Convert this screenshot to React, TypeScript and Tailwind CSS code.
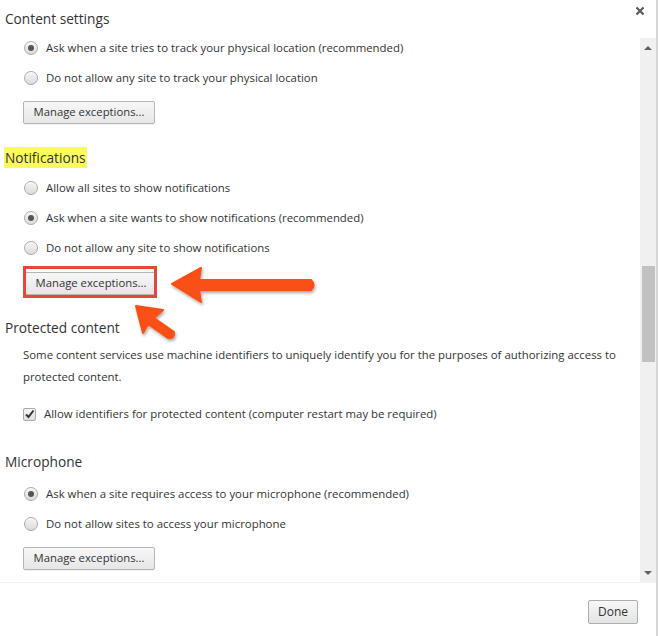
import React from "react";

const font = { fontFamily: '"Open Sans", "Noto Sans", Arial, sans-serif' };

function Radio({ checked }: { checked?: boolean }) {
  return (
    <span className="relative inline-flex h-[14px] w-[14px] shrink-0 items-center justify-center rounded-full border border-[#a9a9a9] bg-gradient-to-b from-[#f4f4f4] to-[#dcdcdc] shadow-[inset_0_1px_0_#fff]">
      {checked && <span className="h-[6px] w-[6px] rounded-full bg-[#555]" />}
    </span>
  );
}

function RadioRow({ checked, children, mt }: { checked?: boolean; children: React.ReactNode; mt: string }) {
  return (
    <div className={`flex h-[20px] items-center gap-[8px] pl-[24px] ${mt}`}>
      <Radio checked={checked} />
      <span className="whitespace-nowrap text-[11.4px] text-[#333]">{children}</span>
    </div>
  );
}

function ManageBtn({ mt }: { mt: string }) {
  return (
    <div className={`pl-[23px] ${mt}`}>
      <button className="flex h-[23px] w-[132px] items-center justify-center rounded-[2px] border border-[#b5b5b5] bg-gradient-to-b from-[#f7f7f7] to-[#e6e6e6] text-[11.3px] text-[#333] shadow-[0_1px_0_rgba(0,0,0,0.06)]">
        Manage exceptions...
      </button>
    </div>
  );
}

function Heading({ children, mt }: { children: React.ReactNode; mt: string }) {
  return <div className={`h-[21px] pl-[5px] text-[13.7px] leading-[21px] text-[#333] ${mt}`}>{children}</div>;
}

export default function App() {
  return (
    <div className="relative h-[636px] w-[658px] overflow-hidden bg-white" style={font}>
      <div className="flex h-full flex-col border-r-2 border-[#d6d6d6]">
        {/* header */}
        <div className="flex h-[38px] items-start justify-between">
          <div className="pl-[5px] pt-[8px] text-[13.7px] leading-[22px] text-[#333]">Content settings</div>
          <div className="pr-[10px] pt-[4px] text-[#666]">
            <svg width="12" height="12" viewBox="0 0 12 12" className="mt-[1px]">
              <path d="M2.5 2.5 L9.5 9.5 M9.5 2.5 L2.5 9.5" stroke="#5a5a5a" strokeWidth="2.2" />
            </svg>
          </div>
        </div>
        {/* body */}
        <div className="flex h-[544px]">
          <div className="flex-1 overflow-hidden">
            <RadioRow checked mt="mt-0">Ask when a site tries to track your physical location (recommended)</RadioRow>
            <RadioRow mt="mt-[10px]">Do not allow any site to track your physical location</RadioRow>
            <ManageBtn mt="mt-[13px]" />
            <div className="mt-[21px] h-[21px] pl-[4px]">
              <span className="inline-block h-[21px] bg-[#fbfb5c] px-[1px] text-[13.7px] leading-[21px] text-[#333]">Notifications</span>
            </div>
            <RadioRow mt="mt-[12px]">Allow all sites to show notifications</RadioRow>
            <RadioRow checked mt="mt-[10px]">Ask when a site wants to show notifications (recommended)</RadioRow>
            <RadioRow mt="mt-[10px]">Do not allow any site to show notifications</RadioRow>
            <div className="relative mt-[14px]">
              <div className="pl-[2px]">
                <ManageBtn mt="mt-0" />
              </div>
              <span className="absolute left-[23px] top-[-6px] h-[32px] w-[134px] border-[3px] border-[#e6463c]" />
            </div>
            <Heading mt="mt-[22px]">Protected content</Heading>
            <div className="mt-[6px] whitespace-nowrap pl-[23px] text-[11.4px] leading-[22px] text-[#333]">
              Some content services use machine identifiers to uniquely identify you for the purposes of authorizing access to
              <br />
              protected content.
            </div>
            <div className="mt-[16px] flex h-[20px] items-center gap-[8px] pl-[23px]">
              <span className="flex h-[13px] w-[13px] shrink-0 items-center justify-center rounded-[2px] border border-[#a9a9a9] bg-gradient-to-b from-[#f6f6f6] to-[#dedede]">
                <svg width="11" height="11" viewBox="0 0 11 11">
                  <path d="M2 5.5 L4.5 8 L9.5 1.5" fill="none" stroke="#333" strokeWidth="2" />
                </svg>
              </span>
              <span className="whitespace-nowrap text-[11.4px] text-[#333]">Allow identifiers for protected content (computer restart may be required)</span>
            </div>
            <Heading mt="mt-[27px]">Microphone</Heading>
            <RadioRow checked mt="mt-[12px]">Ask when a site requires access to your microphone (recommended)</RadioRow>
            <RadioRow mt="mt-[10px]">Do not allow sites to access your microphone</RadioRow>
            <ManageBtn mt="mt-[13px]" />
          </div>
          {/* scrollbar */}
          <div className="flex w-[16px] flex-col items-center bg-[#f0f0f0]">
            <div className="flex h-[18px] items-center justify-center">
              <svg width="8" height="5" viewBox="0 0 8 5"><path d="M0 5 L4 1 L8 5 Z" fill="#606060" /></svg>
            </div>
            <div className="h-[210px]" />
            <div className="h-[96px] w-[13px] bg-[#c1c1c1]" />
            <div className="flex-1" />
            <div className="flex h-[17px] items-center justify-center">
              <svg width="8" height="5" viewBox="0 0 8 5"><path d="M0 0 L8 0 L4 4 Z" fill="#606060" /></svg>
            </div>
          </div>
        </div>
        {/* footer */}
        <div className="flex flex-1 items-start justify-end border-t border-[#f2f2f2] pr-[18px] pt-[17px]">
          <button className="flex h-[24px] w-[50px] items-center justify-center rounded-[2px] border border-[#adadad] bg-gradient-to-b from-[#f7f7f7] to-[#e4e4e4] text-[12px] text-[#333]">
            Done
          </button>
        </div>
      </div>
      {/* arrows overlay */}
      <svg className="pointer-events-none absolute left-0 top-0" width="658" height="636" viewBox="0 0 658 636">
        <defs>
          <filter id="sh" x="-20%" y="-20%" width="140%" height="160%">
            <feDropShadow dx="1" dy="2" stdDeviation="1.5" floodColor="#000" floodOpacity="0.35" />
          </filter>
        </defs>
        <g filter="url(#sh)" fill="#fa4f12" stroke="#fa4f12" strokeLinejoin="round">
          <path d="M172 284 L201 268 L199 280 L311 280 Q316 285 311 290 L199 290 L201 302 Z" strokeWidth="2" />
          <path d="M136 306 L163 310 L154 318 L174 332 Q175 339 168 338 L148 324 L143 333 Z" strokeWidth="2" />
        </g>
      </svg>
    </div>
  );
}
